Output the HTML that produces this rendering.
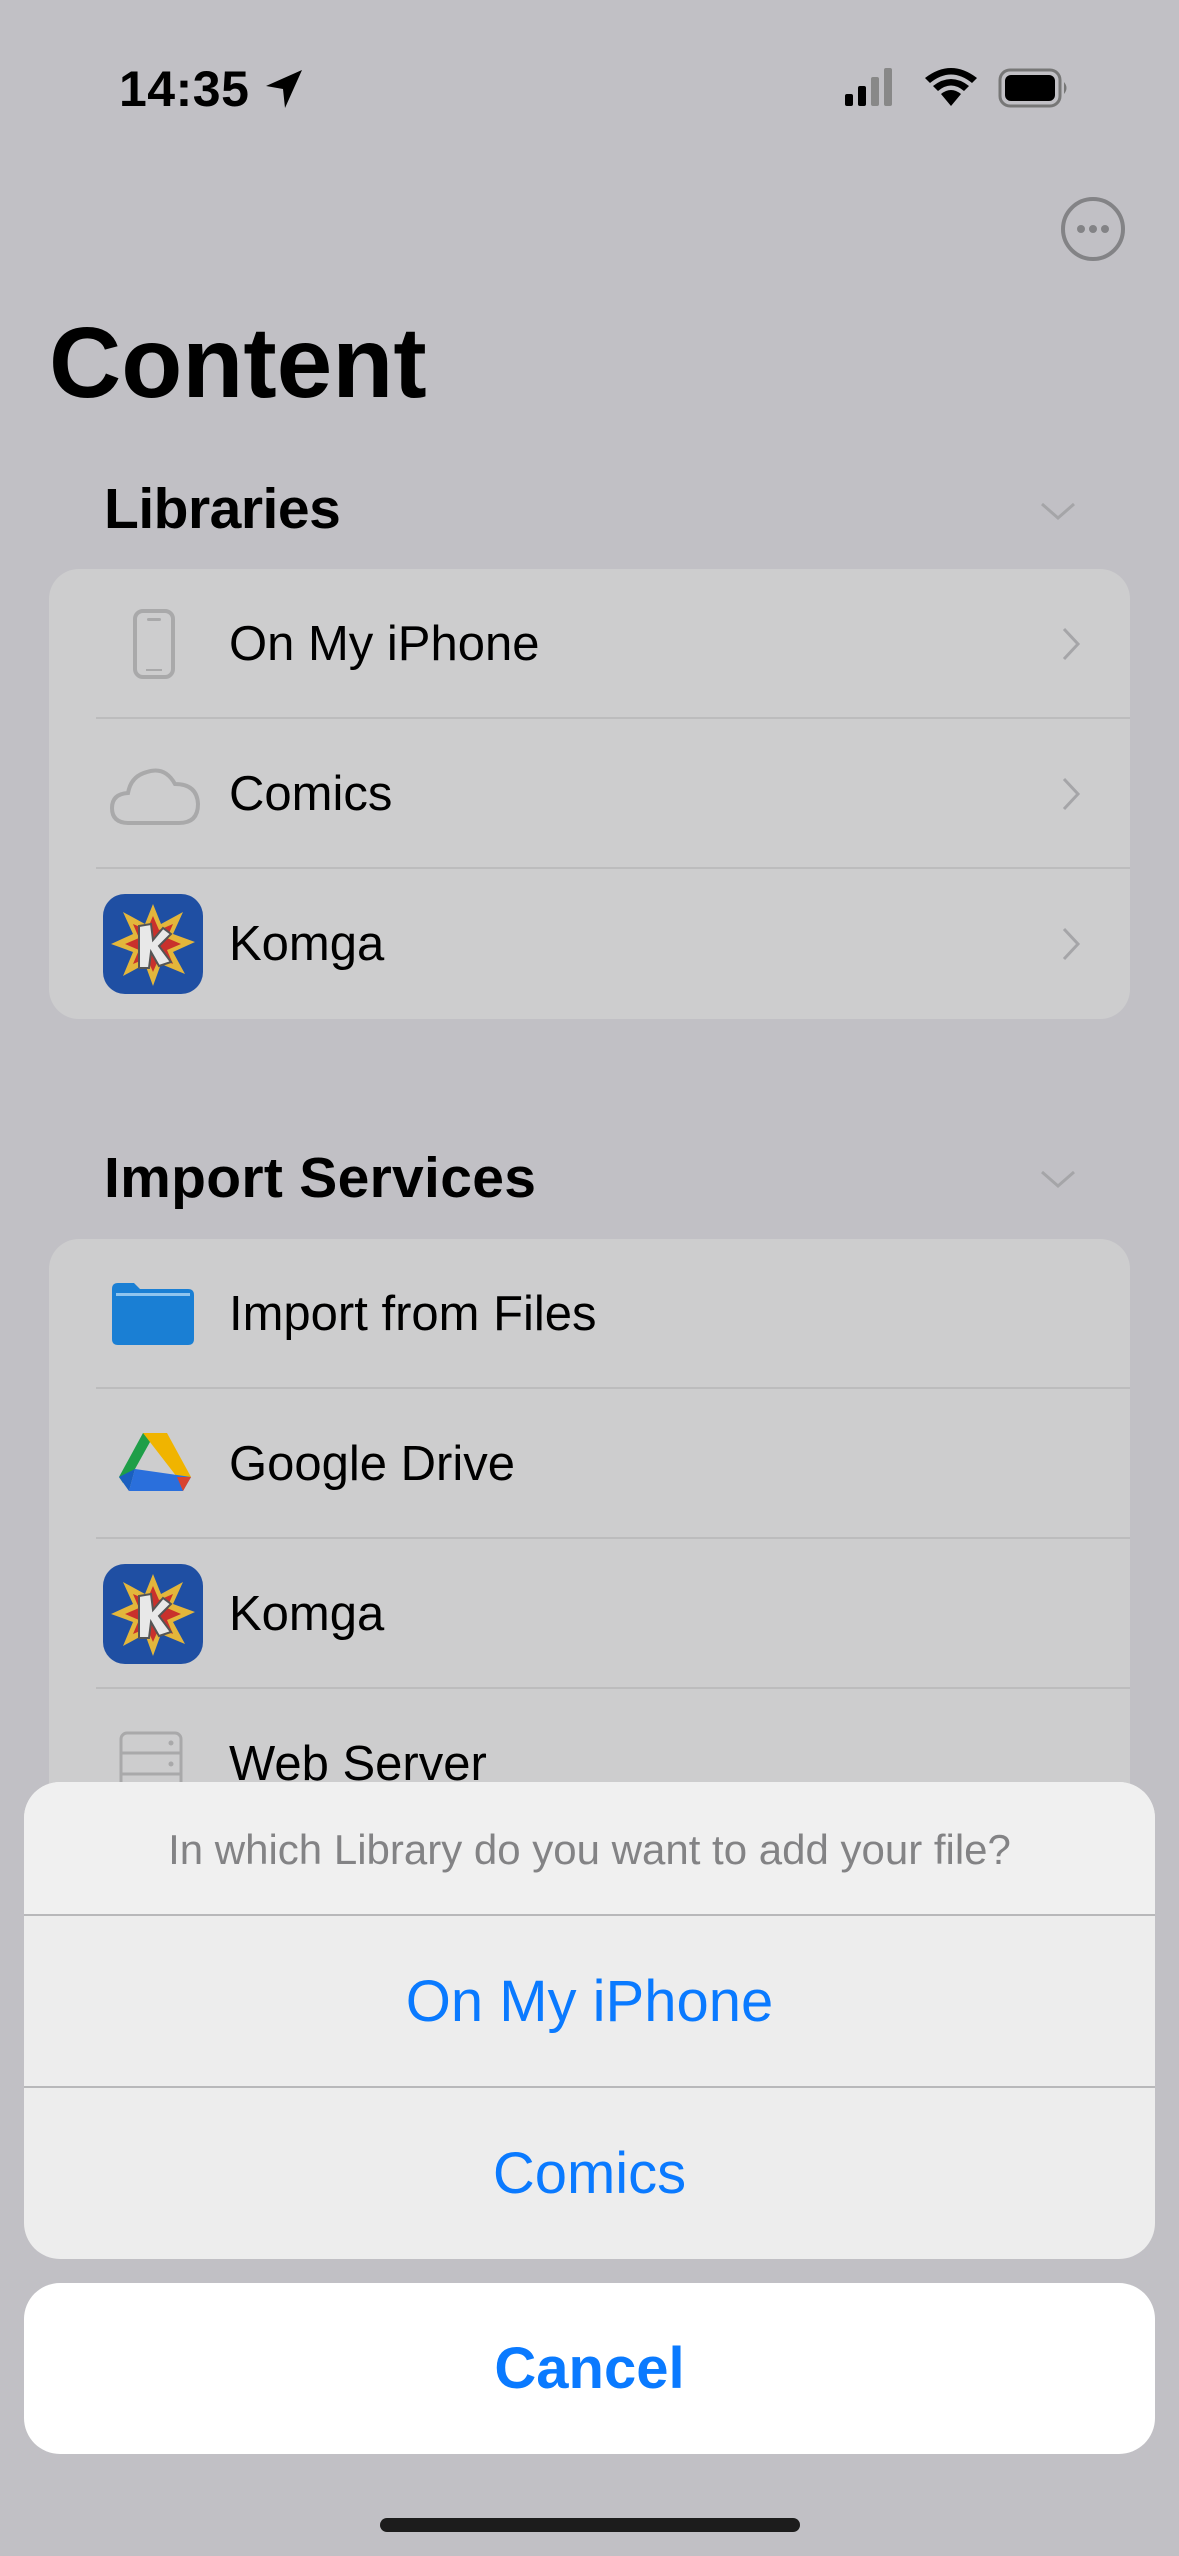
<!DOCTYPE html>
<html><head><meta charset="utf-8"><style>
*{margin:0;padding:0;box-sizing:border-box}
body{width:1179px;height:2556px;background:#c1c0c5;position:relative;overflow:hidden;font-family:"Liberation Sans",sans-serif;color:#000}
.abs{position:absolute}
.card{position:absolute;left:49px;width:1081px;background:#cdcdce;border-radius:30px}
.row{position:absolute;left:0;right:0;height:150px}
.row .t{position:absolute;left:180px;top:50%;transform:translateY(-50%);font-size:49px}
.sep{position:absolute;left:47px;right:0;height:2px;background:#bcbcbd}
.chev{position:absolute;right:49px;top:50%;transform:translateY(-50%)}
.ic{position:absolute;top:50%;transform:translateY(-50%)}
.sheet{position:absolute;left:24px;width:1131px;background:#ededed;border-radius:36px;overflow:hidden}
.blue{color:#0a7aff;text-align:center;position:absolute;left:0;right:0;font-size:58px}
</style></head><body>
<div class="abs" style="left:119px;top:60px;font-size:50px;font-weight:bold;letter-spacing:0.5px">14:35</div>
<svg class="abs" style="left:264px;top:68px" width="40" height="42" viewBox="0 0 40 42"><path d="M38 2 L2 18 L19 21 L21 40 Z" fill="#000"/></svg>
<svg class="abs" style="left:843px;top:68px" width="240" height="40" viewBox="0 0 240 40">
<rect x="2" y="26" width="8" height="12" rx="2" fill="#000"/><rect x="15" y="18" width="8" height="20" rx="2" fill="#000"/><rect x="28" y="9" width="8" height="29" rx="2" fill="#888"/><rect x="41" y="0" width="8" height="38" rx="2" fill="#888"/>
<path d="M108 38 L98 26 Q108 18 118 26 Z M90 18 Q108 4 126 18 L121 23 Q108 12 95 23 Z M82 10 Q108 -10 134 10 L129 15 Q108 -2 87 15 Z" fill="#000"/>
<rect x="157" y="2" width="60" height="36" rx="10" fill="none" stroke="#777" stroke-width="3"/><rect x="162" y="7" width="50" height="26" rx="6" fill="#000"/><path d="M221 14 Q226 20 221 26 Z" fill="#777"/>
</svg>
<svg class="abs" style="left:1060px;top:196px" width="66" height="66" viewBox="0 0 66 66"><circle cx="33" cy="33" r="30" fill="none" stroke="#838386" stroke-width="4"/><circle cx="21" cy="33" r="4" fill="#838386"/><circle cx="33" cy="33" r="4" fill="#838386"/><circle cx="45" cy="33" r="4" fill="#838386"/></svg>
<div class="abs" style="left:49px;top:306px;font-size:100px;font-weight:bold;letter-spacing:0px">Content</div>
<div class="abs" style="left:104px;top:476px;font-size:57px;font-weight:bold;letter-spacing:-0.5px">Libraries</div>
<svg class="abs" style="left:1040px;top:502px" width="36" height="20"><path d="M2 2 L18 16 L34 2" fill="none" stroke="#a5a5a8" stroke-width="3"/></svg>
<div class="card" style="top:569px;height:450px">
 <div class="row" style="top:0"><svg class="ic" style="left:83px" width="44" height="72"><rect x="3" y="3" width="38" height="66" rx="8" fill="none" stroke="#a9a9aa" stroke-width="4"/><rect x="15" y="10" width="14" height="3" rx="1.5" fill="#a9a9aa"/><rect x="14" y="61" width="16" height="2" fill="#a9a9aa"/></svg><div class="t">On My iPhone</div><svg class="chev" width="20" height="36"><path d="M3 3 L17 18 L3 33" fill="none" stroke="#a5a5a8" stroke-width="3"/></svg></div>
 <div class="sep" style="top:148px"></div>
 <div class="row" style="top:150px"><svg class="ic" style="left:60px" width="92" height="64" viewBox="0 0 92 64"><path d="M20 61 Q3 61 3 46 Q3 32 19 31 Q22 14 38 10 Q56 4 66 22 Q88 22 89 42 Q89 61 70 61 Z" fill="none" stroke="#a9a9aa" stroke-width="4"/></svg><div class="t">Comics</div><svg class="chev" width="20" height="36"><path d="M3 3 L17 18 L3 33" fill="none" stroke="#a5a5a8" stroke-width="3"/></svg></div>
 <div class="sep" style="top:298px"></div>
 <div class="row" style="top:300px"><svg class="ic" style="left:54px" width="100" height="100" viewBox="0 0 100 100"><rect width="100" height="100" rx="22" fill="#1f4fa3"/><path d="M50 10 L58 30 L80 18 L70 40 L92 48 L70 58 L82 80 L58 70 L50 92 L42 70 L20 82 L30 58 L8 50 L30 40 L20 18 L42 30 Z" fill="#e3b63b"/><path d="M50 22 L56 36 L70 30 L64 44 L78 50 L64 56 L70 70 L56 64 L50 78 L44 64 L30 70 L36 56 L22 50 L36 44 L30 30 L44 36 Z" fill="#c9312c"/><path d="M36 32 L48 30 L50 46 L60 34 L68 40 L56 52 L68 68 L56 72 L48 58 L46 74 L36 74 Z" fill="#e8e8e8" stroke="#555" stroke-width="2"/></svg><div class="t">Komga</div><svg class="chev" width="20" height="36"><path d="M3 3 L17 18 L3 33" fill="none" stroke="#a5a5a8" stroke-width="3"/></svg></div>
</div>
<div class="abs" style="left:104px;top:1145px;font-size:57px;font-weight:bold;letter-spacing:0.3px">Import Services</div>
<svg class="abs" style="left:1040px;top:1170px" width="36" height="20"><path d="M2 2 L18 16 L34 2" fill="none" stroke="#a5a5a8" stroke-width="3"/></svg>
<div class="card" style="top:1239px;height:700px">
 <div class="row" style="top:0"><svg class="ic" style="left:63px" width="82" height="62" viewBox="0 0 82 62"><path d="M0 6 Q0 0 6 0 L22 0 L28 6 L76 6 Q82 6 82 12 L82 56 Q82 62 76 62 L6 62 Q0 62 0 56 Z" fill="#1a7fd4"/><rect x="4" y="10" width="74" height="3" fill="#8fc4ee"/></svg><div class="t">Import from Files</div></div>
 <div class="sep" style="top:148px"></div>
 <div class="row" style="top:150px"><svg class="ic" style="left:70px" width="72" height="62" viewBox="0 0 72 62"><path d="M24 0 L36 0 L16 36 L4 50 L0 44 Z" fill="#1e9e48"/><path d="M24 0 L48 0 L72 44 L58 44 Z" fill="#f0b400"/><path d="M16 36 L72 44 L64 58 L10 58 Z" fill="#2a6fdc"/><path d="M58 44 L72 44 L64 58 Z" fill="#d9432f"/><path d="M0 44 L16 36 L10 58 Z" fill="#1a5fc0"/></svg><div class="t">Google Drive</div></div>
 <div class="sep" style="top:298px"></div>
 <div class="row" style="top:300px"><svg class="ic" style="left:54px" width="100" height="100" viewBox="0 0 100 100"><rect width="100" height="100" rx="22" fill="#1f4fa3"/><path d="M50 10 L58 30 L80 18 L70 40 L92 48 L70 58 L82 80 L58 70 L50 92 L42 70 L20 82 L30 58 L8 50 L30 40 L20 18 L42 30 Z" fill="#e3b63b"/><path d="M50 22 L56 36 L70 30 L64 44 L78 50 L64 56 L70 70 L56 64 L50 78 L44 64 L30 70 L36 56 L22 50 L36 44 L30 30 L44 36 Z" fill="#c9312c"/><path d="M36 32 L48 30 L50 46 L60 34 L68 40 L56 52 L68 68 L56 72 L48 58 L46 74 L36 74 Z" fill="#e8e8e8" stroke="#555" stroke-width="2"/></svg><div class="t">Komga</div></div>
 <div class="sep" style="top:448px"></div>
 <div class="row" style="top:450px"><svg class="ic" style="left:70px" width="64" height="66"><rect x="2" y="2" width="60" height="62" rx="6" fill="none" stroke="#a9a9aa" stroke-width="3"/><line x1="2" y1="22" x2="62" y2="22" stroke="#a9a9aa" stroke-width="3"/><line x1="2" y1="43" x2="62" y2="43" stroke="#a9a9aa" stroke-width="3"/><circle cx="52" cy="12" r="2.5" fill="#a9a9aa"/><circle cx="52" cy="33" r="2.5" fill="#a9a9aa"/><circle cx="52" cy="54" r="2.5" fill="#a9a9aa"/></svg><div class="t">Web Server</div></div>
</div>
<div class="sheet" style="top:1782px;height:477px">
 <div class="abs" style="left:0;right:0;top:0;height:132px;background:#f0f0f0"></div>
 <div class="abs" style="left:0;right:0;top:44px;text-align:center;font-size:42px;color:#838385">In which Library do you want to add your file?</div>
 <div class="abs" style="left:0;right:0;top:132px;height:2px;background:#b8b8ba"></div>
 <div class="blue" style="top:186px">On My iPhone</div>
 <div class="abs" style="left:0;right:0;top:304px;height:2px;background:#b8b8ba"></div>
 <div class="blue" style="top:358px">Comics</div>
</div>
<div class="sheet" style="top:2283px;height:171px;background:#fff">
 <div class="blue" style="top:52px;font-weight:bold">Cancel</div>
</div>
<div class="abs" style="left:380px;top:2518px;width:420px;height:14px;border-radius:7px;background:#1c1c1c"></div>
</body></html>
